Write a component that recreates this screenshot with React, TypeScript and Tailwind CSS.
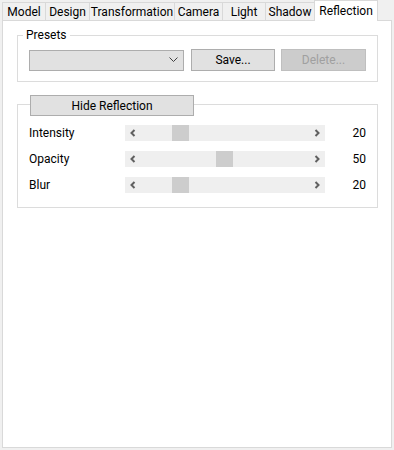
import React from "react";

const font = { fontFamily: '"Segoe UI", Roboto, "Liberation Sans", sans-serif' };

const tabs = [
  { name: "Model", w: "w-[44px]" },
  { name: "Design", w: "w-[45px]" },
  { name: "Transformation", w: "w-[86px]" },
  { name: "Camera", w: "w-[49px]" },
  { name: "Light", w: "w-[44px]" },
  { name: "Shadow", w: "w-[50px]" },
];

function Arrow({ dir }: { dir: "l" | "r" }) {
  return (
    <svg width="6" height="8" viewBox="0 0 6 8" className="shrink-0">
      {dir === "l" ? (
        <polyline points="4.5,1 1.5,4 4.5,7" fill="none" stroke="#606060" strokeWidth="2" />
      ) : (
        <polyline points="1.5,1 4.5,4 1.5,7" fill="none" stroke="#606060" strokeWidth="2" />
      )}
    </svg>
  );
}

function SliderRow({ label, value, thumb }: { label: string; value: number; thumb: string }) {
  return (
    <div className="flex items-center h-[16px]">
      <div className="w-[107px] pl-[11px] text-[12px] leading-[16px] text-black">{label}</div>
      <div className="w-[200px] h-[16px] bg-[#efefef] flex items-center justify-between px-[5px]">
        <Arrow dir="l" />
        <div className="flex-1 h-full relative">
          <div className={`absolute top-0 h-full w-[17px] bg-[#cdcdcd] ${thumb}`} />
        </div>
        <Arrow dir="r" />
      </div>
      <div className="w-[41px] text-right text-[12px] leading-[16px] text-black">{value}</div>
    </div>
  );
}

export default function App() {
  return (
    <div className="w-[394px] h-[450px] bg-[#f0f0f0] overflow-hidden" style={font}>
      <div className="flex h-[20px] pl-[2px] items-end">
        {tabs.map((t, i) => (
          <div
            key={t.name}
            className={`${t.w} h-[18px] ${i > 0 ? "-ml-px" : ""} border border-b-0 border-[#d9d9d9] bg-[#f0f0f0] flex items-center justify-center pt-[1px] text-[12px] leading-[16px] text-black`}
          >
            {t.name}
          </div>
        ))}
        <div className="-ml-px w-[64px] h-[21px] -mb-px relative z-10 border border-b-0 border-[#d9d9d9] bg-white flex items-start justify-center pt-[2px] text-[12px] leading-[16px] text-black">
          Reflection
        </div>
      </div>
      <div className="mx-[2px] h-[428px] border border-[#d9d9d9] bg-white pt-[14px] pl-[14px]">
        {/* Presets */}
        <div className="relative w-[361px] h-[47px] border border-[#dcdcdc]">
          <div className="absolute left-[5px] top-[-9px] px-[3px] bg-white text-[12px] leading-[16px] text-black">
            Presets
          </div>
          <div className="flex items-center mt-[13px] pl-[11px]">
            <div className="w-[155px] h-[21px] bg-[#e1e1e1] border border-[#adadad] flex items-center justify-end pr-[5px]">
              <svg width="9" height="6" viewBox="0 0 9 6">
                <polyline points="0.5,0.5 4.5,4.5 8.5,0.5" fill="none" stroke="#404040" strokeWidth="1" />
              </svg>
            </div>
            <div className="ml-[7px] w-[84px] h-[22px] bg-[#e1e1e1] border border-[#adadad] flex items-center justify-center text-[12px] text-black">
              Save...
            </div>
            <div className="ml-[6px] w-[85px] h-[22px] bg-[#cccccc] border border-[#bfbfbf] flex items-center justify-center text-[12px] text-[#a0a0a0]">
              Delete...
            </div>
          </div>
        </div>
        {/* Reflection */}
        <div className="mt-[22px] w-[361px] h-[104px] border border-[#dcdcdc]">
          <div className="-mt-[10px] ml-[12px] w-[164px] h-[21px] bg-[#e1e1e1] border border-[#adadad] flex items-center justify-center text-[12px] text-black">
            Hide Reflection
          </div>
          <div className="mt-[9px] flex flex-col gap-[10px]">
            <SliderRow label="Intensity" value={20} thumb="left-[36px]" />
            <SliderRow label="Opacity" value={50} thumb="left-[80px]" />
            <SliderRow label="Blur" value={20} thumb="left-[36px]" />
          </div>
        </div>
      </div>
    </div>
  );
}
